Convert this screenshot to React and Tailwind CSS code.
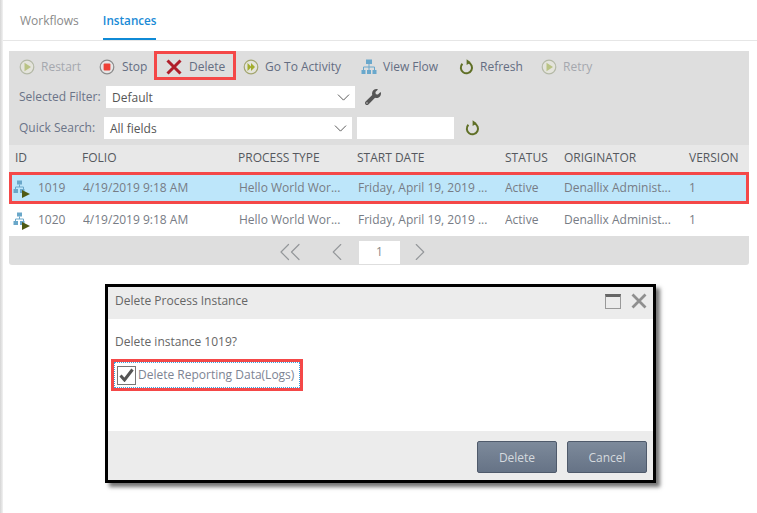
import { ChevronDown, ChevronLeft, ChevronRight, ChevronsLeft } from 'lucide-react';
import { FaWrench } from 'react-icons/fa';

const font = { fontFamily: '"Open Sans", sans-serif' };

function PlayIcon({ disabled }) {
    const ring = disabled ? '#b4b9a6' : '#a3a66f';
    const tri = disabled ? '#b9c384' : '#a2ad2c';
    return (
        <svg width="16" height="16" viewBox="0 0 16 16">
            <circle cx="8" cy="8" r="6.8" fill="#e4e4dc" stroke={ring} strokeWidth="1.2" />
            <path d="M5.5 3.8 L12 8 L5.5 12.2 Z" fill={tri} />
        </svg>
    );
}

function ForwardIcon() {
    return (
        <svg width="16" height="16" viewBox="0 0 16 16">
            <circle cx="8" cy="8" r="6.8" fill="#e4e4dc" stroke="#a3a66f" strokeWidth="1.2" />
            <path d="M4.5 4 L8.5 8 L4.5 12 Z M8 4 L12 8 L8 12 Z" fill="#a2ad2c" />
        </svg>
    );
}

function StopIcon() {
    return (
        <svg width="16" height="16" viewBox="0 0 16 16">
            <circle cx="8" cy="8" r="6.8" fill="#e6e6e6" stroke="#8a8a8a" strokeWidth="1.2" />
            <rect x="4.6" y="4.6" width="6.8" height="6.8" rx="1" fill="#ee4035" />
        </svg>
    );
}

function XIcon() {
    return (
        <svg width="16" height="16" viewBox="0 0 16 16">
            <path d="M1.5 1.5 L14.5 14.5 M14.5 1.5 L1.5 14.5" stroke="#b01e2a" strokeWidth="3" />
        </svg>
    );
}

function FlowIcon() {
    return (
        <svg width="16" height="16" viewBox="0 0 16 16">
            <rect x="5" y="0.5" width="6" height="4.5" fill="#6aa8cc" />
            <path d="M8 5 V8 M2.5 11 V8 H13.5 V11 M8 8 V11" stroke="#6aa8cc" fill="none" />
            <rect x="0.5" y="11" width="4" height="4" fill="#6aa8cc" />
            <rect x="6" y="11" width="4" height="4" fill="#6aa8cc" />
            <rect x="11.5" y="11" width="4" height="4" fill="#6aa8cc" />
        </svg>
    );
}

function RefreshIcon() {
    return (
        <svg width="15" height="16" viewBox="0 0 15 16">
            <path d="M9.2 3.4 A5.6 5.6 0 1 1 3.4 4.8" stroke="#5f6f26" strokeWidth="2" fill="none" />
            <path d="M7.6 0.2 L11.8 3.2 L7.6 6 Z" fill="#5f6f26" />
        </svg>
    );
}

function RowIcon() {
    return (
        <svg width="18" height="18" viewBox="0 0 18 18">
            <rect x="4" y="0.5" width="5" height="4" fill="#6aa7c9" />
            <path d="M6.5 4.5 V7 M2.5 9 V7 H10.5 V9" stroke="#6aa7c9" fill="none" />
            <rect x="0.5" y="9" width="4.5" height="4" fill="#6aa7c9" />
            <rect x="7" y="9" width="4.5" height="4" fill="#6aa7c9" />
            <path d="M9 10 L17 14 L9 18 Z" fill="#4f5a12" />
        </svg>
    );
}

function ToolButton({ icon, label, disabled, gap = 'gap-[6px]', className = '' }) {
    return (
        <div className={`flex items-center ${gap} ${className}`}>
            {icon}
            <span className={`text-[12px] font-medium ${disabled ? 'text-[#a5a8ae]' : 'text-[#646d82]'}`}>{label}</span>
        </div>
    );
}

function Select({ value, width }) {
    return (
        <div className={`${width} h-[22px] bg-white flex items-center justify-between pl-[6px] pr-[1px] text-[12px] text-[#555]`}>
            <span className="pt-[1px]">{value}</span>
            <ChevronDown size={21} strokeWidth={1.1} color="#555" />
        </div>
    );
}

const rows = [
    { id: '1019', selected: true },
    { id: '1020', selected: false },
];

function Row({ id, selected }) {
    const cell = 'truncate';
    return (
        <div className={`relative h-[32px] flex items-center text-[12px] text-[#777c85] ${selected ? 'bg-[#bde6fa]' : 'bg-white'}`}>
            {selected && <div className="absolute inset-0 border-[3px] border-[#f44848]" />}
            <div className="w-[29px] pl-[4px] pt-[2px]"><RowIcon /></div>
            <div className={`w-[45px] ${cell}`}>{id}</div>
            <div className={`w-[156px] ${cell}`}>4/19/2019 9:18 AM</div>
            <div className={`w-[119px] ${cell}`}>Hello World Wor...</div>
            <div className={`w-[147px] ${cell}`}>Friday, April 19, 2019 ...</div>
            <div className={`w-[59px] ${cell}`}>Active</div>
            <div className={`w-[125px] ${cell}`}>Denallix Administ...</div>
            <div>1</div>
        </div>
    );
}

function DialogButton({ label }) {
    return (
        <div className="w-[80px] h-[32px] pt-[1px] rounded-[2px] border border-[#4f5a6b] bg-gradient-to-b from-[#7d8a9b] to-[#667386] flex items-center justify-center text-[12px] text-[#d5dade]">
            {label}
        </div>
    );
}

export default function App() {
    return (
        <div className="w-[757px] h-[513px] overflow-hidden bg-white flex" style={font}>
            <div className="w-[3px] shrink-0 bg-gradient-to-r from-[#d5d5d5] to-[#f2f2f2]" />
            <div className="flex-1 min-w-0">
                {/* Tabs */}
                <div className="h-[41px] border-b border-[#e6e6e6] flex pl-[17px] gap-[24px] text-[12px]">
                    <div className="pt-[12px] text-[#8a8a8a]">Workflows</div>
                    <div className="pt-[12px] w-[53px] h-[40px] border-b-2 border-[#0f8ad6] font-semibold text-[11.7px] text-[#1a8ad6]">Instances</div>
                </div>

                {/* Panel */}
                <div className="mt-[10px] ml-[6px] w-[740px] rounded-b-[3px] bg-[#dedede]">
                    <div className="h-[32px] flex items-center">
                        <ToolButton icon={<PlayIcon disabled />} label="Restart" disabled className="ml-[10px] w-[80px]" />
                        <ToolButton icon={<StopIcon />} label="Stop" gap="gap-[7px]" className="w-[55px]" />
                        <div className="self-start w-[82px] h-[29px] border-[3px] border-[#f44848] flex items-center gap-[7px] pl-[9px] pt-[3px]">
                            <XIcon />
                            <span className="text-[12px] font-medium text-[#646d82]">Delete</span>
                        </div>
                        <ToolButton icon={<ForwardIcon />} label="Go To Activity" className="ml-[7px] w-[118px]" />
                        <ToolButton icon={<FlowIcon />} label="View Flow" className="w-[98px]" />
                        <ToolButton icon={<RefreshIcon />} label="Refresh" className="w-[82px]" />
                        <ToolButton icon={<PlayIcon disabled />} label="Retry" disabled />
                    </div>
                    <div className="h-[22px] mt-[3px] flex items-center pl-[10px]">
                        <span className="w-[87px] text-[12px] text-[#6b7488]">Selected Filter:</span>
                        <Select value="Default" width="w-[249px]" />
                        <FaWrench size={16} color="#555" className="ml-[10px]" />
                    </div>
                    <div className="h-[22px] mt-[9px] flex items-center pl-[10px]">
                        <span className="w-[85px] text-[12px] text-[#6b7488]">Quick Search:</span>
                        <Select value="All fields" width="w-[248px]" />
                        <div className="w-[97px] h-[22px] bg-white ml-[5px]" />
                        <div className="ml-[11px]"><RefreshIcon /></div>
                    </div>

                    {/* Grid header */}
                    <div className="mt-[6px] h-[27px] pb-[2px] bg-[#e8e8e8] flex items-center text-[12px] font-medium text-[#55585e]">
                        <div className="w-[73px] pl-[6px]">ID</div>
                        <div className="w-[156px]">FOLIO</div>
                        <div className="w-[119px]">PROCESS TYPE</div>
                        <div className="w-[148px]">START DATE</div>
                        <div className="w-[59px]">STATUS</div>
                        <div className="w-[125px]">ORIGINATOR</div>
                        <div>VERSION</div>
                    </div>
                    {rows.map((r) => <Row key={r.id} {...r} />)}

                    {/* Pager */}
                    <div className="h-[29px] pt-[3px] flex items-center text-[#94979a]">
                        <ChevronsLeft size={36} strokeWidth={0.8} className="ml-[263px]" />
                        <ChevronLeft size={30} strokeWidth={0.9} className="ml-[14px]" />
                        <div className="ml-[7px] w-[41px] h-[23px] bg-white flex items-center justify-center text-[12px] text-[#888]">1</div>
                        <ChevronRight size={30} strokeWidth={0.9} className="ml-[5px]" />
                    </div>
                </div>

                {/* Dialog */}
                <div className="mt-[19px] ml-[102px] w-[551px] h-[199px] border-[3px] border-black bg-white flex flex-col shadow-[4px_4px_4px_rgba(0,0,0,0.55)]">
                    <div className="h-[32px] shrink-0 bg-[#ececec] flex items-center pb-[4px] pl-[7px] pr-[6px] text-[12px] font-medium text-[#666]">
                        <span className="flex-1">Delete Process Instance</span>
                        <div className="w-[16px] h-[15px] border border-[#999] border-t-[3px] border-t-[#666] mr-[10px]" />
                        <svg width="16" height="16" viewBox="0 0 16 16">
                            <path d="M1.5 1.5 L14.5 14.5 M14.5 1.5 L1.5 14.5" stroke="#8f8f8f" strokeWidth="2.8" />
                        </svg>
                    </div>
                    <div className="flex-1 pl-[3px]">
                        <div className="pl-[4px] mt-[14px] text-[12px] text-[#666]">Delete instance 1019?</div>
                        <div className="mt-[8px] w-[192px] h-[32px] border-[3px] border-[#f44848] flex items-center">
                            <div className="w-[186px] h-[26px] border border-dotted border-[#3aa0dc] flex items-center pl-[2px] gap-[2px]">
                                <div className="w-[19px] h-[19px] border border-[#777] flex items-center justify-center">
                                    <svg width="15" height="14" viewBox="0 0 15 14">
                                        <path d="M1.5 7.5 L5.5 12 L13.5 1.5" stroke="#555" strokeWidth="3" fill="none" />
                                    </svg>
                                </div>
                                <span className="text-[12px] text-[#7d8493]">Delete Reporting Data(Logs)</span>
                            </div>
                        </div>
                    </div>
                    <div className="h-[49px] shrink-0 bg-[#ececec] flex items-start pt-[10px] justify-end gap-[10px] pr-[6px]">
                        <DialogButton label="Delete" />
                        <DialogButton label="Cancel" />
                    </div>
                </div>
            </div>
        </div>
    );
}
